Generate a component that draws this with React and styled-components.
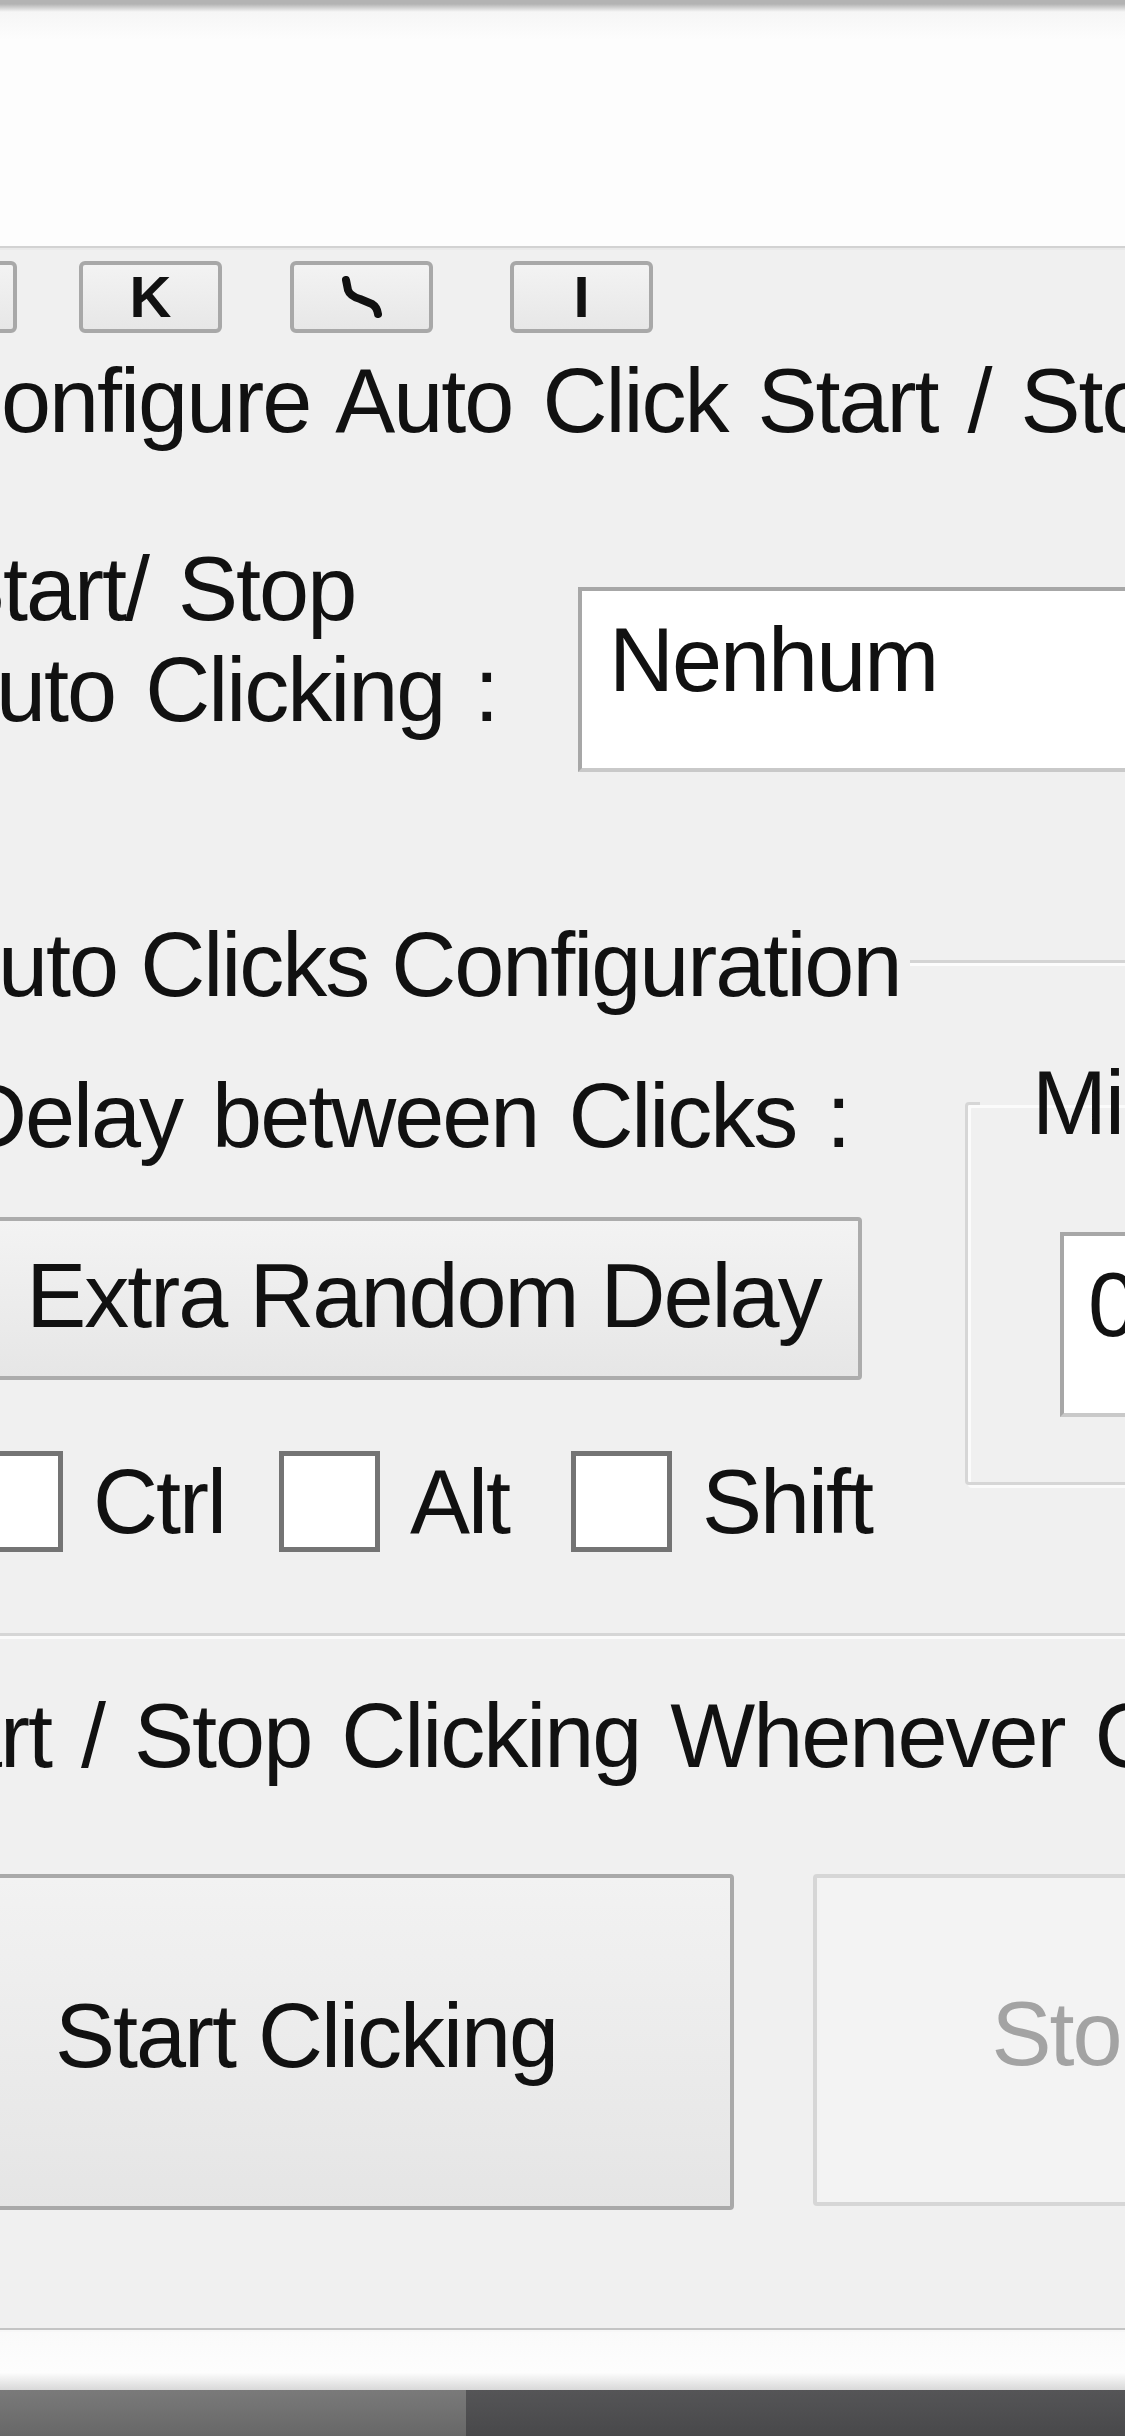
import React from "react";
import styled, { createGlobalStyle } from "styled-components";

const GlobalStyle = createGlobalStyle`
  html, body {
    margin: 0;
    padding: 0;
    background: #f0f0f0;
    overflow: hidden;
  }
  * { box-sizing: border-box; }
`;

const Screen = styled.div`
  width: 1125px;
  height: 2436px;
  overflow: hidden;
  display: flex;
  flex-direction: column;
  background: #f0f0f0;
  font-family: "Liberation Sans", Arial, sans-serif;
  color: #111;
`;

const TitleArea = styled.div`
  height: 246px;
  flex-shrink: 0;
  background: linear-gradient(to bottom, #b3b3b3 0, #b3b3b3 4px, #f6f6f6 12px, #fdfdfd 40px, #fdfdfd 100%);
`;

const Rule = styled.div`
  flex-shrink: 0;
  height: ${(p) => p.$size || 4}px;
  border-top: ${(p) => Math.ceil((p.$size || 4) / 2)}px solid ${(p) => p.$dark || "#d4d4d4"};
  background: ${(p) => p.$light || "#fbfbfb"};
  margin-top: ${(p) => p.$top || 0}px;
`;

const Toolbar = styled.div`
  display: flex;
  height: 72px;
  margin-top: 11px;
  margin-left: -126px;
  flex-shrink: 0;
`;

const ToolButton = styled.div`
  width: 143px;
  height: 72px;
  margin-left: ${(p) => p.$gap || 0}px;
  border: 4px solid #a8a8a8;
  border-radius: 6px;
  background: linear-gradient(#f3f3f3, #e7e7e7);
  display: flex;
  align-items: center;
  justify-content: center;
  font-family: "Liberation Sans", Arial, sans-serif;
  font-weight: bold;
  font-size: 58px;
  line-height: 1;
  color: #111;
`;

const Text = styled.div`
  font-size: 90px;
  line-height: ${(p) => p.$lh || 100}px;
  letter-spacing: -2px;
  word-spacing: ${(p) => (p.$ws === undefined ? 7 : p.$ws)}px;
  white-space: nowrap;
  margin-left: ${(p) => p.$offset || 0}px;
  margin-top: ${(p) => p.$top || 0}px;
  color: ${(p) => (p.$muted ? "#a2a2a2" : "#111")};
  flex-shrink: 0;
`;

const StartStopRow = styled.div`
  display: flex;
  align-items: flex-start;
  margin-top: 88px;
  flex-shrink: 0;
`;

const LabelBlock = styled.div`
  width: 578px;
  flex-shrink: 0;
`;

const TextBox = styled.div`
  width: ${(p) => p.$width}px;
  height: 185px;
  margin-top: ${(p) => p.$top || 0}px;
  margin-left: ${(p) => p.$left || 0}px;
  flex-shrink: 0;
  background: #fff;
  border: 4px solid #a7a7a7;
  border-right-color: #c9c9c9;
  border-bottom-color: #c9c9c9;
  padding: 19px 0 0 ${(p) => p.$pad || 27}px;
  font-size: 90px;
  line-height: 100px;
  letter-spacing: -2px;
  white-space: nowrap;
  overflow: hidden;
`;

const GroupHeader = styled.div`
  display: flex;
  align-items: center;
  margin-top: 143px;
  flex-shrink: 0;
`;

const HeaderLine = styled.div`
  flex: 1;
  height: 6px;
  margin-left: 10px;
  margin-top: -4px;
  border-top: 3px solid #d4d4d4;
  background: #fcfcfc;
`;

const GroupBody = styled.div`
  display: flex;
  align-items: flex-start;
  flex-shrink: 0;
`;

const LeftColumn = styled.div`
  width: 965px;
  flex-shrink: 0;
  display: flex;
  flex-direction: column;
`;

const DelayButton = styled.div`
  width: 877px;
  height: 163px;
  margin-left: -15px;
  margin-top: 51px;
  border: 4px solid #acacac;
  border-radius: 4px;
  background: linear-gradient(#f3f3f3, #e6e6e6);
  display: flex;
  align-items: center;
  justify-content: center;
  font-size: 90px;
  line-height: 100px;
  letter-spacing: -2px;
  white-space: nowrap;
  padding-bottom: 6px;
`;

const CheckRow = styled.div`
  display: flex;
  align-items: center;
  margin-top: 71px;
  margin-left: -38px;
`;

const CheckItem = styled.div`
  display: flex;
  align-items: center;
  margin-right: ${(p) => p.$after || 0}px;
`;

const CheckBox = styled.span`
  width: 101px;
  height: 101px;
  border: 5px solid #747474;
  background: #fff;
  margin-right: 30px;
  flex-shrink: 0;
`;

const SubGroup = styled.fieldset`
  margin: 38px 0 0 0;
  padding: 79px 0 65px 0;
  width: 260px;
  flex-shrink: 0;
  border: 3px solid #d6d6d6;
  border-radius: 4px;
  box-shadow: 3px 3px 0 #fbfbfb, inset 3px 3px 0 #fbfbfb;
  min-width: 0;
`;

const SubLegend = styled.legend`
  margin-left: 12px;
  padding: 0 6px 0 52px;
  font-size: 90px;
  line-height: 100px;
  letter-spacing: -2px;
  white-space: nowrap;
  color: #111;
`;

const ActionRow = styled.div`
  display: flex;
  margin-top: 88px;
  margin-left: -122px;
  gap: 79px;
  flex-shrink: 0;
`;

const ActionButton = styled.div`
  width: 856px;
  height: ${(p) => (p.$disabled ? 332 : 336)}px;
  flex-shrink: 0;
  border: 4px solid ${(p) => (p.$disabled ? "#d6d6d6" : "#a9a9a9")};
  border-radius: 4px;
  background: ${(p) => (p.$disabled ? "#f3f3f3" : "linear-gradient(#f2f2f2, #e5e5e5)")};
  color: ${(p) => (p.$disabled ? "#a3a3a3" : "#111")};
  display: flex;
  align-items: center;
  justify-content: center;
  font-size: 90px;
  line-height: 100px;
  letter-spacing: -2px;
  white-space: nowrap;
  padding-bottom: 12px;
`;

const WhiteBand = styled.div`
  height: 58px;
  flex-shrink: 0;
  background: linear-gradient(to bottom, #fafafa 0, #fdfdfd 70%, #d8d8d8 100%);
`;

const Taskbar = styled.div`
  flex: 1;
  display: flex;
`;

const TaskSegment = styled.div`
  width: ${(p) => (p.$width ? `${p.$width}px` : "auto")};
  flex: ${(p) => (p.$width ? "0 0 auto" : 1)};
  background: ${(p) => p.$bg};
`;

function HookGlyph() {
  return (
    <svg width="44" height="42" viewBox="0 0 44 42">
      <path
        d="M6 4 L8 14 Q10 20 20 23 L32 28 Q37 31 38 38"
        fill="none"
        stroke="#111"
        strokeWidth="8"
        strokeLinecap="round"
        strokeLinejoin="round"
      />
    </svg>
  );
}

export default function App() {
  return (
    <>
      <GlobalStyle />
      <Screen>
        <TitleArea />
        <Rule $size={4} $dark="#d2d2d2" $light="#e9e9e9" />

        <Toolbar>
          <ToolButton />
          <ToolButton $gap={62}>K</ToolButton>
          <ToolButton $gap={68}><HookGlyph /></ToolButton>
          <ToolButton $gap={77}>I</ToolButton>
        </Toolbar>

        <Text $top={18} $offset={-62}>Configure Auto Click Start / Stop</Text>

        <StartStopRow>
          <LabelBlock>
            <Text $lh={101} $offset={-55}>Start/ Stop</Text>
            <Text $lh={101} $offset={-62}>Auto Clicking :</Text>
          </LabelBlock>
          <TextBox $width={600} $top={48}>Nenhum</TextBox>
        </StartStopRow>

        <GroupHeader>
          <Text $offset={-60} $ws={0}>Auto Clicks Configuration</Text>
          <HeaderLine />
        </GroupHeader>

        <GroupBody>
          <LeftColumn>
            <Text $top={51} $offset={-38}>Delay between Clicks :</Text>
            <DelayButton>Extra Random Delay</DelayButton>
            <CheckRow>
              <CheckItem $after={54}>
                <CheckBox />
                <Text>Ctrl</Text>
              </CheckItem>
              <CheckItem $after={62}>
                <CheckBox />
                <Text>Alt</Text>
              </CheckItem>
              <CheckItem>
                <CheckBox />
                <Text>Shift</Text>
              </CheckItem>
            </CheckRow>
          </LeftColumn>
          <SubGroup>
            <SubLegend>Minimum</SubLegend>
            <TextBox $width={200} $pad={24} $left={92}>0</TextBox>
          </SubGroup>
        </GroupBody>

        <Rule $size={6} $top={81} $dark="#d6d6d6" $light="#fbfbfb" />

        <Text $top={47} $offset={-129}>Start / Stop Clicking Whenever Configured Key is Pressed</Text>

        <ActionRow>
          <ActionButton>Start Clicking</ActionButton>
          <ActionButton $disabled>Stop Clicking</ActionButton>
        </ActionRow>

        <Rule $size={4} $top={118} $dark="#c4c4c4" $light="#f7f7f7" />
        <WhiteBand />
        <Taskbar>
          <TaskSegment $width={466} $bg="linear-gradient(to bottom, #7a7a7a, #676767)" />
          <TaskSegment $bg="linear-gradient(to bottom, #555557, #48484a)" />
        </Taskbar>
      </Screen>
    </>
  );
}
